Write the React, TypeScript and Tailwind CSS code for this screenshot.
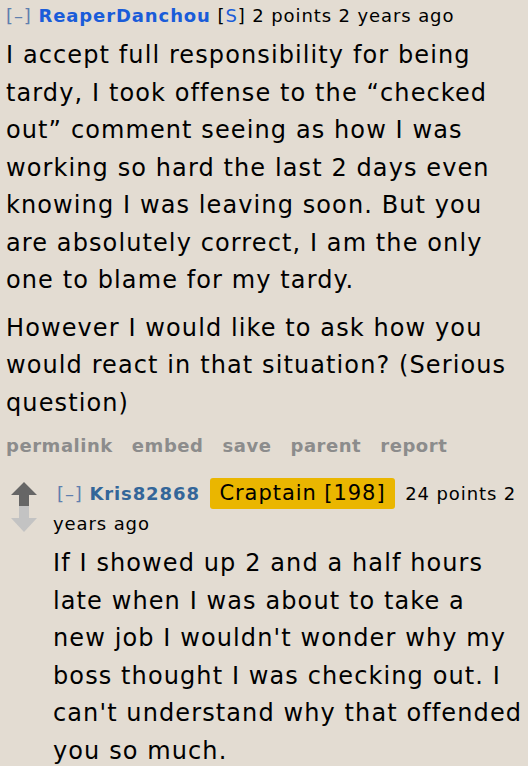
export default function App() {
  return (
    <div className="h-[766px] w-[528px] overflow-hidden bg-[#e3dcd2] font-['DejaVu_Sans',sans-serif] text-black">
      <div className="pl-[6px] pt-[4px]">
        <div className="text-[18px] leading-[24px] tracking-[0.05em]">
          <span className="text-[#5f7fae]">[–]</span>{" "}
          <span className="font-bold text-[#1a5cd9]">ReaperDanchou</span>{" "}
          <span>
            [<span className="text-[#1a5cd9]">S</span>]
          </span>{" "}
          2 points 2 years ago
        </div>
        <div className="pr-2 pt-[9px] text-[24px] leading-[37.5px] tracking-[0.046em]">
          <p>
            I accept full responsibility for being tardy, I took offense to the
            “checked out” comment seeing as how I was working so hard the last 2
            days even knowing I was leaving soon. But you are absolutely correct,
            I am the only one to blame for my tardy.
          </p>
          <p className="mt-[10px]">
            However I would like to ask how you would react in that situation?
            (Serious question)
          </p>
        </div>
        <div className="mt-[12px] flex gap-[19px] text-[18px] font-bold leading-[24px] tracking-[0.03em] text-[#8c8c8c]">
          <span>permalink</span>
          <span>embed</span>
          <span>save</span>
          <span>parent</span>
          <span>report</span>
        </div>
        <div className="mt-[20px] flex">
          <div className="flex w-[47px] flex-col items-start pl-[4px] pt-[2px]">
            <svg width="28" height="28" viewBox="0 0 28 28">
              <path d="M14 2 L27 15 H19 V28 H9 V15 H1 Z" fill="#666" />
            </svg>
            <svg width="28" height="28" viewBox="0 0 28 28" className="-mt-[2px]">
              <path d="M9 0 H19 V12 H27 L14 26 L1 12 H9 Z" fill="#c3c3c3" />
            </svg>
          </div>
          <div className="flex-1">
            <div className="text-[18px] leading-[30px] tracking-[0.05em]">
              <span className="ml-[4px] text-[#5f7fae]">[–]</span>{" "}
              <span className="font-bold text-[#336699]">Kris82868</span>{" "}
              <span className="mx-[4px] inline-block rounded-[3px] bg-[#eab600] px-[9px] text-[21px] leading-[31px] tracking-[0.045em]">
                Craptain [198]
              </span>{" "}
              24 points 2 years ago
            </div>
            <div className="pt-[6px] text-[24px] leading-[37.5px] tracking-[0.046em]">
              <p className="whitespace-nowrap">
                If I showed up 2 and a half hours
                <br />
                late when I was about to take a
                <br />
                new job I wouldn't wonder why my
                <br />
                boss thought I was checking out. I
                <br />
                can't understand why that offended
                <br />
                you so much.
              </p>
            </div>
          </div>
        </div>
      </div>
    </div>
  );
}
